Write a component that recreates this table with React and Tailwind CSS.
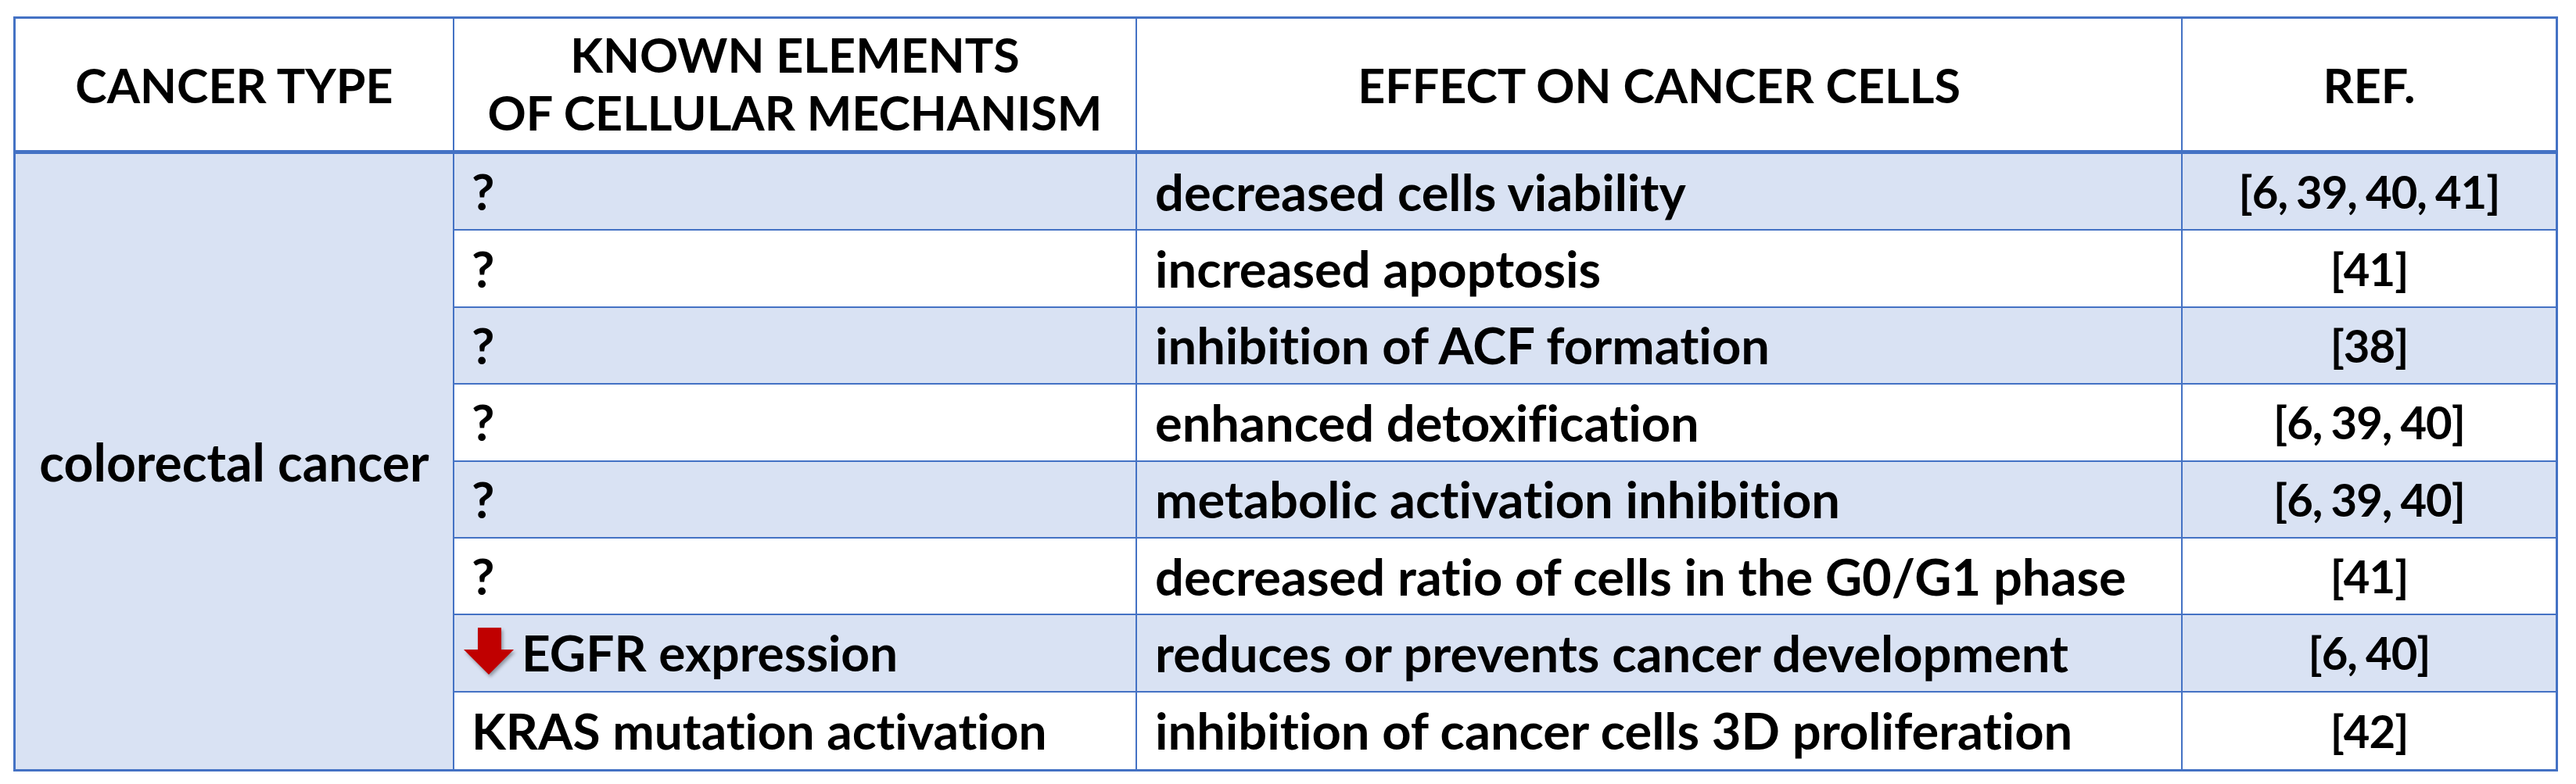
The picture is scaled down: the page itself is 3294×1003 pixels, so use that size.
import React from "react";

const rows = [
  { mech: "?", effect: "decreased cells viability", ref: "[6, 39, 40, 41]", shade: true },
  { mech: "?", effect: "increased apoptosis", ref: "[41]", shade: false },
  { mech: "?", effect: "inhibition of ACF formation", ref: "[38]", shade: true },
  { mech: "?", effect: "enhanced detoxification", ref: "[6, 39, 40]", shade: false },
  { mech: "?", effect: "metabolic activation inhibition", ref: "[6, 39, 40]", shade: true },
  { mech: "?", effect: "decreased ratio of cells in the G0/G1 phase", ref: "[41]", shade: false },
  { mech: "EGFR expression", arrow: true, effect: "reduces or prevents cancer development", ref: "[6, 40]", shade: true },
  { mech: "KRAS mutation activation", effect: "inhibition of cancer cells 3D proliferation", ref: "[42]", shade: false },
];

function DownArrow() {
  return (
    <svg width="66" height="64" viewBox="0 0 66 64" className="shrink-0 mr-[8px] -ml-[10px] drop-shadow-[2px_3px_2px_rgba(0,0,0,0.35)]">
      <polygon points="18,0 48,0 48,28 64,28 32,60 0,28 18,28" fill="#c00000" />
    </svg>
  );
}

export default function App() {
  return (
    <div className="w-[3294px] h-[1003px] bg-white pt-[21px] pl-[17px] font-['Lato','Liberation_Sans',sans-serif] font-bold text-black [font-variant-ligatures:none]">
      <div className="w-[3254px] h-[966px] border-[3px] border-[#4472c4] grid grid-cols-[561px_873px_1337px_477px] grid-rows-[173px_repeat(8,1fr)]">
        {/* header */}
        <div className="border-r-2 border-b-[5px] border-[#4472c4] bg-white flex items-center justify-center text-[61px] leading-none">
          CANCER TYPE
        </div>
        <div className="border-r-2 border-b-[5px] border-[#4472c4] bg-white flex flex-col items-center justify-center text-[61px] leading-[74px] pb-[2px]">
          <span>KNOWN ELEMENTS</span>
          <span>OF CELLULAR MECHANISM</span>
        </div>
        <div className="border-r-2 border-b-[5px] border-[#4472c4] bg-white flex items-center justify-center text-[61px] leading-none">
          EFFECT ON CANCER CELLS
        </div>
        <div className="border-b-[5px] border-[#4472c4] bg-white flex items-center justify-center text-[61px] leading-none">
          REF.
        </div>

        {/* merged first column */}
        <div className="row-start-2 row-end-10 col-start-1 border-r-2 border-[#4472c4] bg-[#d9e2f3] flex items-center justify-center text-[66px] leading-none">
          colorectal cancer
        </div>

        {rows.map((r, i) => {
          const bg = r.shade ? "bg-[#d9e2f3]" : "bg-white";
          const last = i === rows.length - 1;
          const bb = last ? "" : "border-b-2";
          return (
            <React.Fragment key={i}>
              <div className={`col-start-2 border-r-2 ${bb} border-[#4472c4] ${bg} flex items-center pl-[22px] text-[64px] leading-none`}>
                {r.arrow ? <DownArrow /> : null}
                <span>{r.mech}</span>
              </div>
              <div className={`col-start-3 border-r-2 ${bb} border-[#4472c4] ${bg} flex items-center pl-[23px] text-[65px] leading-none`}>
                {r.effect}
              </div>
              <div className={`col-start-4 ${bb} border-[#4472c4] ${bg} flex items-center justify-center text-[58px] leading-none tracking-[-1px] [word-spacing:-2px]`}>
                {r.ref}
              </div>
            </React.Fragment>
          );
        })}
      </div>
    </div>
  );
}
